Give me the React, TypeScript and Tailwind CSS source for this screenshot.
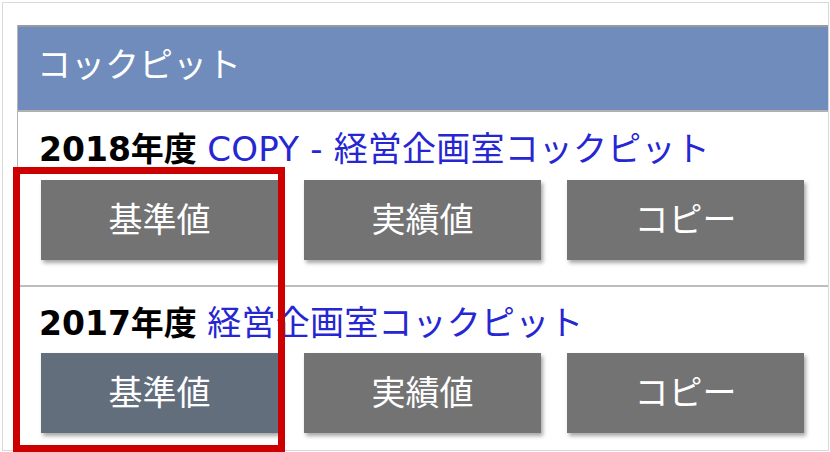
import React from 'react';

interface Plan {
  year: string;
  title: string;
  active?: boolean;
  pt: string;
  gap: string;
  last?: boolean;
}

const plans: Plan[] = [
  { year: '2018年度', title: 'COPY - 経営企画室コックピット', pt: 'pt-[17px]', gap: 'mt-[10px]' },
  { year: '2017年度', title: '経営企画室コックピット', active: true, pt: 'pt-[16px]', gap: 'mt-[9px]', last: true },
];

const font = { fontFamily: '"DejaVu Sans", "Noto Sans CJK JP", sans-serif' };

function ActionButton({ label, active }: { label: string; active?: boolean }) {
  return (
    <button
      className={
        'w-[237px] h-[80px] flex items-center justify-center text-[34px] text-white shadow-[2px_3px_4px_rgba(0,0,0,0.35)] ' +
        (active ? 'bg-[#636e7d]' : 'bg-[#737373]')
      }
      style={font}
    >
      {label}
    </button>
  );
}

function PlanRow({ plan }: { plan: Plan }) {
  return (
    <div className={'pl-[23px] ' + plan.pt + (plan.last ? '' : ' pb-[25px] border-b-2 border-[#bdbdbd]')}>
      <div className="text-[33px] leading-[40px] whitespace-nowrap -ml-[2px]" style={font}>
        <span className="font-bold text-black">{plan.year}</span>{' '}
        <span className="text-[#2626d2] text-[34px] tracking-[0.2px]">{plan.title}</span>
      </div>
      <div className={'flex gap-[26px] ' + plan.gap}>
        <ActionButton label="基準値" active={plan.active} />
        <ActionButton label="実績値" />
        <ActionButton label="コピー" />
      </div>
    </div>
  );
}

export default function App() {
  return (
    <div className="relative w-[830px] h-[452px] bg-white overflow-hidden pt-[2px] pl-[2px]">
      <div className="w-[827px] h-[449px] border border-[#d9d9d9] pl-[14px] pt-[22px] overflow-hidden">
        <div className="border-l border-[#b5b5b5] h-[430px]">
          <div
            className="h-[87px] bg-[#6f8cbc] border-t-2 border-b-2 border-t-[#9a9a9a] border-b-[#b0b0b0] flex items-center pl-[19px] pb-[6px] text-[34px] text-white"
            style={font}
          >
            コックピット
          </div>
          {plans.map((p) => (
            <PlanRow key={p.year} plan={p} />
          ))}
        </div>
      </div>
      <div className="absolute left-[13px] top-[167px] w-[272px] h-[285px] border-[7px] border-[#cc0000]" />
    </div>
  );
}
